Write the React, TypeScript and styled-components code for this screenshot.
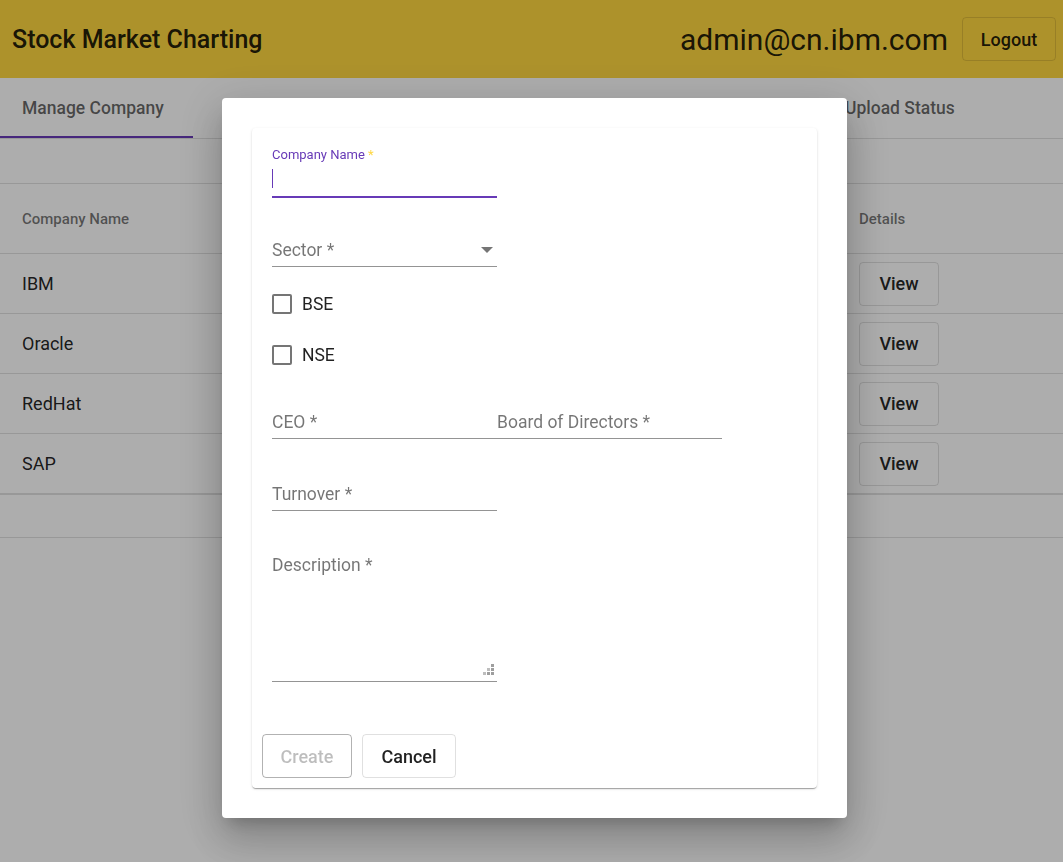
import React from 'react';
import styled, { createGlobalStyle } from 'styled-components';

const GlobalStyle = createGlobalStyle`
  html, body {
    margin: 0;
    padding: 0;
  }
  body {
    font-family: Roboto, "Helvetica Neue", Arial, sans-serif;
    background: #fff;
    color: rgba(0, 0, 0, 0.87);
  }
`;

const Toolbar = styled.header`
  height: 78px;
  background: #ffd740;
  display: flex;
  align-items: center;
  padding: 0 7px 0 12px;
  box-sizing: border-box;
`;

const Title = styled.h1`
  margin: 0;
  flex: 1;
  font-size: 25px;
  font-weight: 500;
  color: rgba(0, 0, 0, 0.87);
`;

const UserEmail = styled.span`
  font-size: 30px;
  font-weight: 400;
  margin-right: 14px;
`;

const OutlineButton = styled.button<{ $w: number; $disabled?: boolean }>`
  width: ${p => p.$w}px;
  height: 44px;
  box-sizing: border-box;
  border: 1px solid ${p => (p.$disabled ? 'rgba(0,0,0,0.3)' : 'rgba(0,0,0,0.12)')};
  border-radius: 4px;
  background: transparent;
  font-family: inherit;
  font-size: 18px;
  font-weight: 500;
  color: ${p => (p.$disabled ? 'rgba(0,0,0,0.26)' : 'rgba(0,0,0,0.87)')};
  padding: 0;
  cursor: ${p => (p.$disabled ? 'default' : 'pointer')};
`;

const TabBar = styled.nav`
  display: flex;
  height: 60px;
  border-bottom: 1px solid rgba(0, 0, 0, 0.12);
`;

const Tab = styled.div<{ $w?: number; $active?: boolean; $center?: boolean }>`
  width: ${p => (p.$w ? `${p.$w}px` : 'auto')};
  box-sizing: border-box;
  padding: 0 22px;
  display: flex;
  align-items: center;
  justify-content: ${p => (p.$center ? 'center' : 'flex-start')};
  font-size: 17.5px;
  font-weight: 500;
  color: rgba(0, 0, 0, 0.6);
  box-shadow: ${p => (p.$active ? 'inset 0 -2px 0 #673ab7' : 'none')};
`;

const TableArea = styled.section`
  margin-top: 44px;
  border-top: 1px solid rgba(0, 0, 0, 0.12);
`;

const Row = styled.div<{ $head?: boolean; $last?: boolean }>`
  display: grid;
  grid-template-columns: 837px 1fr;
  align-items: center;
  padding-left: 22px;
  height: ${p => (p.$head ? 69 : 59)}px;
  border-bottom: ${p => (p.$last ? 2 : 1)}px solid rgba(0, 0, 0, 0.12);
  font-size: ${p => (p.$head ? 15 : 18)}px;
  font-weight: ${p => (p.$head ? 500 : 400)};
  color: ${p => (p.$head ? 'rgba(0,0,0,0.54)' : 'rgba(0,0,0,0.87)')};
`;

const Paginator = styled.div`
  height: 42px;
  border-bottom: 1px solid rgba(0, 0, 0, 0.12);
`;

const Backdrop = styled.div`
  position: fixed;
  inset: 0;
  background: rgba(0, 0, 0, 0.32);
  display: flex;
  justify-content: center;
  align-items: flex-start;
  padding: 98px 0 0 6px;
`;

const Dialog = styled.div`
  width: 625px;
  height: 720px;
  box-sizing: border-box;
  padding: 30px;
  background: #fff;
  border-radius: 4px;
  box-shadow: 0 11px 15px -7px rgba(0, 0, 0, 0.2), 0 24px 38px 3px rgba(0, 0, 0, 0.14),
    0 9px 46px 8px rgba(0, 0, 0, 0.12);
`;

const Card = styled.form`
  height: 660px;
  box-sizing: border-box;
  padding: 10px;
  border-radius: 4px;
  background: #fff;
  display: flex;
  flex-direction: column;
  box-shadow: 0 2px 1px -1px rgba(0, 0, 0, 0.2), 0 1px 1px 0 rgba(0, 0, 0, 0.14),
    0 1px 3px 0 rgba(0, 0, 0, 0.12);
`;

const Fields = styled.div`
  flex: 1;
  padding: 9px 10px 0;
  display: flex;
  flex-direction: column;
`;

const FocusedField = styled.div`
  width: 225px;
  border-bottom: 2px solid #673ab7;
  padding-bottom: 8px;
`;

const FloatLabel = styled.label`
  display: block;
  font-size: 13px;
  line-height: 16px;
  color: #673ab7;

  span {
    color: #ffd740;
  }
`;

const Caret = styled.div`
  width: 1px;
  height: 19px;
  margin-top: 6px;
  background: #673ab7;
`;

const TextField = styled.div<{ $h: number; $top?: boolean }>`
  width: 225px;
  height: ${p => p.$h}px;
  box-sizing: border-box;
  border-bottom: 1px solid rgba(0, 0, 0, 0.42);
  display: flex;
  align-items: ${p => (p.$top ? 'flex-start' : 'flex-end')};
  justify-content: space-between;
  padding: ${p => (p.$top ? '44px 0 0' : '0 0 6px')};
  position: relative;
  font-size: 17.5px;
  line-height: 20px;
  color: rgba(0, 0, 0, 0.54);
`;

const FieldRow = styled.div`
  display: flex;
  margin-top: 24px;
`;

const SelectArrow = styled.span`
  width: 0;
  height: 0;
  margin: 0 4px 7px 0;
  border-left: 6px solid transparent;
  border-right: 6px solid transparent;
  border-top: 6px solid rgba(0, 0, 0, 0.54);
`;

const Grip = styled.svg`
  position: absolute;
  right: 3px;
  bottom: 6px;
`;

const CheckGroup = styled.div`
  display: flex;
  flex-direction: column;
  gap: 31px;
  margin-top: 27px;
`;

const CheckLabel = styled.label`
  display: flex;
  align-items: center;
  gap: 10px;
  font-size: 17.5px;
  height: 20px;
  color: rgba(0, 0, 0, 0.87);
`;

const CheckBox = styled.span`
  width: 20px;
  height: 20px;
  box-sizing: border-box;
  border: 2px solid rgba(0, 0, 0, 0.54);
  border-radius: 2px;
`;

const Actions = styled.div`
  display: flex;
  gap: 10px;
`;

const companies = ['IBM', 'Oracle', 'RedHat', 'SAP'];

export default function App() {
  return (
    <>
      <GlobalStyle />
      <Toolbar>
        <Title>Stock Market Charting</Title>
        <UserEmail>admin@cn.ibm.com</UserEmail>
        <OutlineButton $w={94} type="button">Logout</OutlineButton>
      </Toolbar>

      <TabBar>
        <Tab $w={193} $active>Manage Company</Tab>
        <Tab $w={210} $center>Manage Exchange</Tab>
        <Tab $w={210} $center>Manage IPO</Tab>
        <Tab $w={210} $center>Import Data</Tab>
        <Tab>Upload Status</Tab>
      </TabBar>

      <TableArea>
        <Row $head>
          <span>Company Name</span>
          <span>Details</span>
        </Row>
        {companies.map((c, i) => (
          <Row key={c} $last={i === companies.length - 1}>
            <span>{c}</span>
            <span>
              <OutlineButton $w={80} type="button">View</OutlineButton>
            </span>
          </Row>
        ))}
        <Paginator />
      </TableArea>

      <Backdrop>
        <Dialog>
          <Card>
            <Fields>
              <FocusedField>
                <FloatLabel>
                  Company Name <span>*</span>
                </FloatLabel>
                <Caret />
              </FocusedField>

              <TextField $h={69}>
                Sector *
                <SelectArrow />
              </TextField>

              <CheckGroup>
                <CheckLabel>
                  <CheckBox />
                  BSE
                </CheckLabel>
                <CheckLabel>
                  <CheckBox />
                  NSE
                </CheckLabel>
              </CheckGroup>

              <FieldRow>
                <TextField $h={50}>CEO *</TextField>
                <TextField $h={50}>Board of Directors *</TextField>
              </FieldRow>

              <TextField $h={72}>Turnover *</TextField>

              <TextField $h={171} $top>
                Description *
                <Grip width="11" height="11" viewBox="0 0 11 11">
                  <rect x="8" y="0" width="3" height="3" fill="#9e9e9e" />
                  <rect x="8" y="4" width="3" height="3" fill="#9e9e9e" />
                  <rect x="8" y="8" width="3" height="3" fill="#9e9e9e" />
                  <rect x="4" y="4" width="3" height="3" fill="#bdbdbd" />
                  <rect x="4" y="8" width="3" height="3" fill="#9e9e9e" />
                  <rect x="0" y="8" width="3" height="3" fill="#bdbdbd" />
                </Grip>
              </TextField>
            </Fields>

            <Actions>
              <OutlineButton $w={90} $disabled type="button">Create</OutlineButton>
              <OutlineButton $w={94} type="button">Cancel</OutlineButton>
            </Actions>
          </Card>
        </Dialog>
      </Backdrop>
    </>
  );
}
